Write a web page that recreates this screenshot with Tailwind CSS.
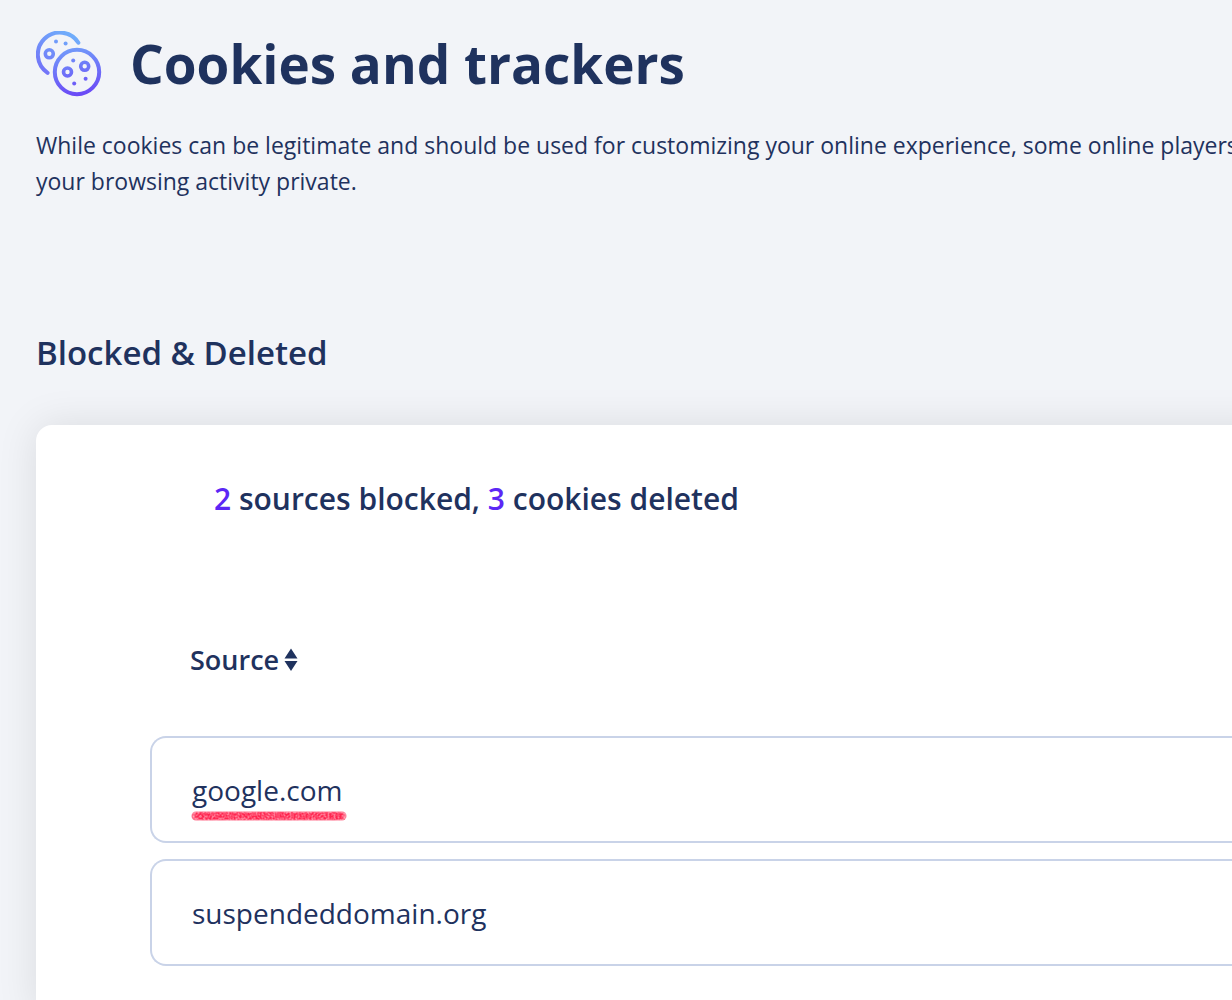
<!DOCTYPE html>
<html lang="en">
<head>
<meta charset="utf-8">
<meta name="viewport" content="width=device-width, initial-scale=1">
<title>Cookies and trackers</title>
<script src="https://cdn.jsdelivr.net/npm/@tailwindcss/browser@4"></script>
</head>
<body class="flex min-h-screen flex-col overflow-x-hidden bg-[#f2f4f8] font-['Segoe_UI','Open_Sans',sans-serif] text-[#1f325e]">
<main class="flex grow flex-col pl-9">
  <header class="flex items-center gap-7 pt-6">
    <svg class="size-[66px] shrink-0" viewBox="0 0 66 66" fill="none" aria-hidden="true">
      <defs>
        <linearGradient id="back" gradientUnits="userSpaceOnUse" x1="38" y1="2" x2="10" y2="46"><stop stop-color="#6fb0fb"/><stop offset="1" stop-color="#7370f8"/></linearGradient>
        <linearGradient id="front" gradientUnits="userSpaceOnUse" x1="38" y1="17" x2="46" y2="66"><stop stop-color="#7199fa"/><stop offset="1" stop-color="#6a45f6"/></linearGradient>
      </defs>
      <g stroke="url(#back)" stroke-width="4">
        <path d="M42.400 11.700A22 22 0 1 0 11.600 41.800" stroke-linecap="round"/>
        <circle cx="13.300" cy="22.800" r="4" stroke-width="3.600"/>
      </g>
      <g fill="url(#back)"><circle cx="20" cy="10.400" r="2"/><circle cx="29.600" cy="12.400" r="2"/></g>
      <g stroke="url(#front)" stroke-width="4">
        <circle cx="41" cy="41" r="22.200"/>
        <circle cx="31.500" cy="41" r="4" stroke-width="3.600"/>
        <circle cx="48.700" cy="35.300" r="4" stroke-width="3.600"/>
      </g>
      <g fill="url(#front)"><circle cx="37.200" cy="29.600" r="2"/><circle cx="38.200" cy="52.500" r="2"/><circle cx="49.600" cy="47.800" r="2"/></g>
    </svg>
    <h1 class="text-[53px] leading-[80px] font-bold whitespace-nowrap">Cookies and trackers</h1>
  </header>
  <p class="mt-[23px] text-[23px] leading-9 whitespace-nowrap">While cookies can be legitimate and should be used for customizing your online experience, some online players<br>your browsing activity private.</p>
  <h2 class="mt-[130px] text-[33px] leading-12 font-semibold">Blocked &amp; Deleted</h2>
  <section class="-mr-10 mt-12 grow rounded-tl-2xl bg-white pt-[50px] pb-8 pl-[114px] shadow-[0_0_40px_rgba(0,0,0,0.1)]">
    <p class="pl-16 text-[30px] leading-12 font-semibold"><span class="text-[#5c27f5]">2</span> sources blocked, <span class="text-[#5c27f5]">3</span> cookies deleted</p>
    <table class="mt-[61px] w-full border-separate border-spacing-x-0 border-spacing-y-4">
      <thead>
        <tr>
          <th scope="col" class="h-[120px] p-0 pl-10 text-left align-middle">
            <button type="button" class="flex items-center gap-[5px] text-[27px] leading-10 font-semibold">Source
              <svg class="h-6 w-[14px]" viewBox="0 0 14 24" fill="currentColor" aria-hidden="true"><path d="M7 .5L13.500 10.500H.5ZM7 23L13.500 13H.5Z"/></svg>
            </button>
          </th>
        </tr>
      </thead>
      <tbody class="text-[28px] leading-10">
        <tr>
          <td class="h-[107px] rounded-l-2xl border-2 border-r-0 border-[#c9d3e8] p-0 pl-10 align-middle">
            <span class="relative inline-block">google.com
              <svg class="absolute top-10 left-0 h-3 w-[154px] overflow-visible" viewBox="0 0 154 12" fill="none" aria-hidden="true">
                <defs>
                  <filter id="chalk" filterUnits="userSpaceOnUse" x="-4" y="-4" width="162" height="20" color-interpolation-filters="sRGB">
                    <feTurbulence type="fractalNoise" baseFrequency="0.5" numOctaves="2" seed="4"/>
                    <feColorMatrix values="0 0 0 0 1  0 0 0 0 1  0 0 0 0 1  3 0 0 0 -1.100" result="grain"/>
                    <feComposite in="grain" in2="SourceGraphic" operator="in"/>
                    <feComponentTransfer result="specks"><feFuncA type="linear" slope="0.400"/></feComponentTransfer>
                    <feMerge><feMergeNode in="SourceGraphic"/><feMergeNode in="specks"/></feMerge>
                  </filter>
                </defs>
                <g filter="url(#chalk)"><path d="M4 6H150" stroke="#ff6b88" stroke-width="9" stroke-linecap="round"/><path d="M6 6H148" stroke="#ff2650" stroke-width="7" stroke-linecap="round"/></g>
              </svg>
            </span>
          </td>
        </tr>
        <tr>
          <td class="h-[107px] rounded-l-2xl border-2 border-r-0 border-[#c9d3e8] p-0 pl-10 align-middle">suspendeddomain.org</td>
        </tr>
      </tbody>
    </table>
  </section>
</main>
</body>
</html>
